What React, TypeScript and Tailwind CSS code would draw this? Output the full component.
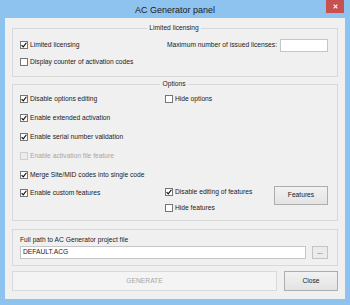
import React from "react";

const font = { fontFamily: '"Liberation Sans", Arial, sans-serif' };

function Check({
  label,
  checked = false,
  disabled = false,
}: {
  label: string;
  checked?: boolean;
  disabled?: boolean;
}) {
  return (
    <label className="flex items-center gap-[2px] h-[14px] whitespace-nowrap">
      <span
        className={
          "w-[8px] h-[8px] border flex items-center justify-center shrink-0 " +
          (disabled ? "border-[#cfcfcf] bg-[#ececec]" : "border-[#767676] bg-white")
        }
      >
        {checked && (
          <svg viewBox="0 0 8 8" className="w-[6px] h-[6px]">
            <path d="M0.8 4.2 L3 6.4 L7.2 1" stroke="#111" strokeWidth="1.6" fill="none" />
          </svg>
        )}
      </span>
      <span className={disabled ? "text-[#a6a6a6]" : "text-[#1b1b1b]"}>{label}</span>
    </label>
  );
}

export default function App() {
  return (
    <div
      style={font}
      className="w-[350px] h-[305px] bg-[#8ec3f0] flex flex-col px-[5px] pb-[6px] text-[6.7px] text-[#1b1b1b]"
    >
      {/* title bar */}
      <div className="h-[18px] flex items-start">
        <div className="flex-1" />
        <div className="text-[9px] leading-[9px] mt-[6px] text-[#1a1a1a]">AC Generator panel</div>
        <div className="flex-1 flex justify-end">
          <div className="w-[18px] h-[13px] bg-[#c75050] flex items-center justify-center mr-[1px]">
            <svg viewBox="0 0 8 8" className="w-[5px] h-[5px]">
              <path d="M1 1 L7 7 M7 1 L1 7" stroke="#fff" strokeWidth="1.8" />
            </svg>
          </div>
        </div>
      </div>

      {/* client area */}
      <div className="flex-1 bg-[#f0f0f0] flex flex-col px-[7px] pt-[6px]">
        <fieldset className="border border-[#d8d8d8] h-[53px] pl-[7px] pr-[9px]">
          <legend className="mx-auto px-[2px] leading-[8px]">Limited licensing</legend>
          <div className="flex items-center justify-between mt-[6px]">
            <Check label="Limited licensing" checked />
            <div className="flex items-center gap-[3px]">
              <span>Maximum number of issued licenses:</span>
              <div className="w-[48px] h-[13px] bg-white border border-[#c6c6c6]" />
            </div>
          </div>
          <div className="mt-[3px]">
            <Check label="Display counter of activation codes" />
          </div>
        </fieldset>

        <fieldset className="border border-[#d8d8d8] h-[141px] mt-[3px] pl-[7px] pr-[9px]">
          <legend className="mx-auto px-[2px] leading-[8px]">Options</legend>
          <div className="grid grid-cols-[145px_1fr] auto-rows-[18.8px] items-center pt-[2px]">
            <Check label="Disable options editing" checked />
            <Check label="Hide options" />
            <Check label="Enable extended activation" checked />
            <div />
            <Check label="Enable serial number validation" checked />
            <div />
            <Check label="Enable activation file feature" disabled />
            <div />
            <Check label="Merge Site/MID codes into single code" checked />
            <div />
            <Check label="Enable custom features" checked />
            <div className="row-span-2 self-start flex justify-between pt-[2px]">
              <div className="flex flex-col gap-[1.7px] -mt-[0.6px]">
                <Check label="Disable editing of features" checked />
                <Check label="Hide features" />
              </div>
              <button className="w-[54px] h-[19px] border border-[#adadad] bg-gradient-to-b from-[#f2f2f2] to-[#e3e3e3] text-[#1b1b1b]">
                Features
              </button>
            </div>
          </div>
        </fieldset>

        <div className="border border-[#d8d8d8] h-[37px] mt-[8px] pl-[7px] pr-[9px] pt-[5px]">
          <div className="leading-[9px]">Full path to AC Generator project file</div>
          <div className="flex gap-[6px] mt-[2px]">
            <div className="flex-1 h-[13px] bg-white border border-[#c6c6c6] flex items-center pl-[2px]">
              DEFAULT.ACG
            </div>
            <button className="w-[16px] h-[13px] border border-[#c3c3c3] bg-[#ebebeb] flex items-center justify-center leading-none">
              ...
            </button>
          </div>
        </div>

        <div className="flex gap-[7px] mt-[5px]">
          <button className="flex-1 h-[20px] border border-[#d9d9d9] bg-[#f4f4f4] text-[#a6a6a6]">
            GENERATE
          </button>
          <button className="w-[54px] h-[20px] border border-[#adadad] bg-gradient-to-b from-[#f2f2f2] to-[#e3e3e3]">
            Close
          </button>
        </div>
      </div>
    </div>
  );
}
